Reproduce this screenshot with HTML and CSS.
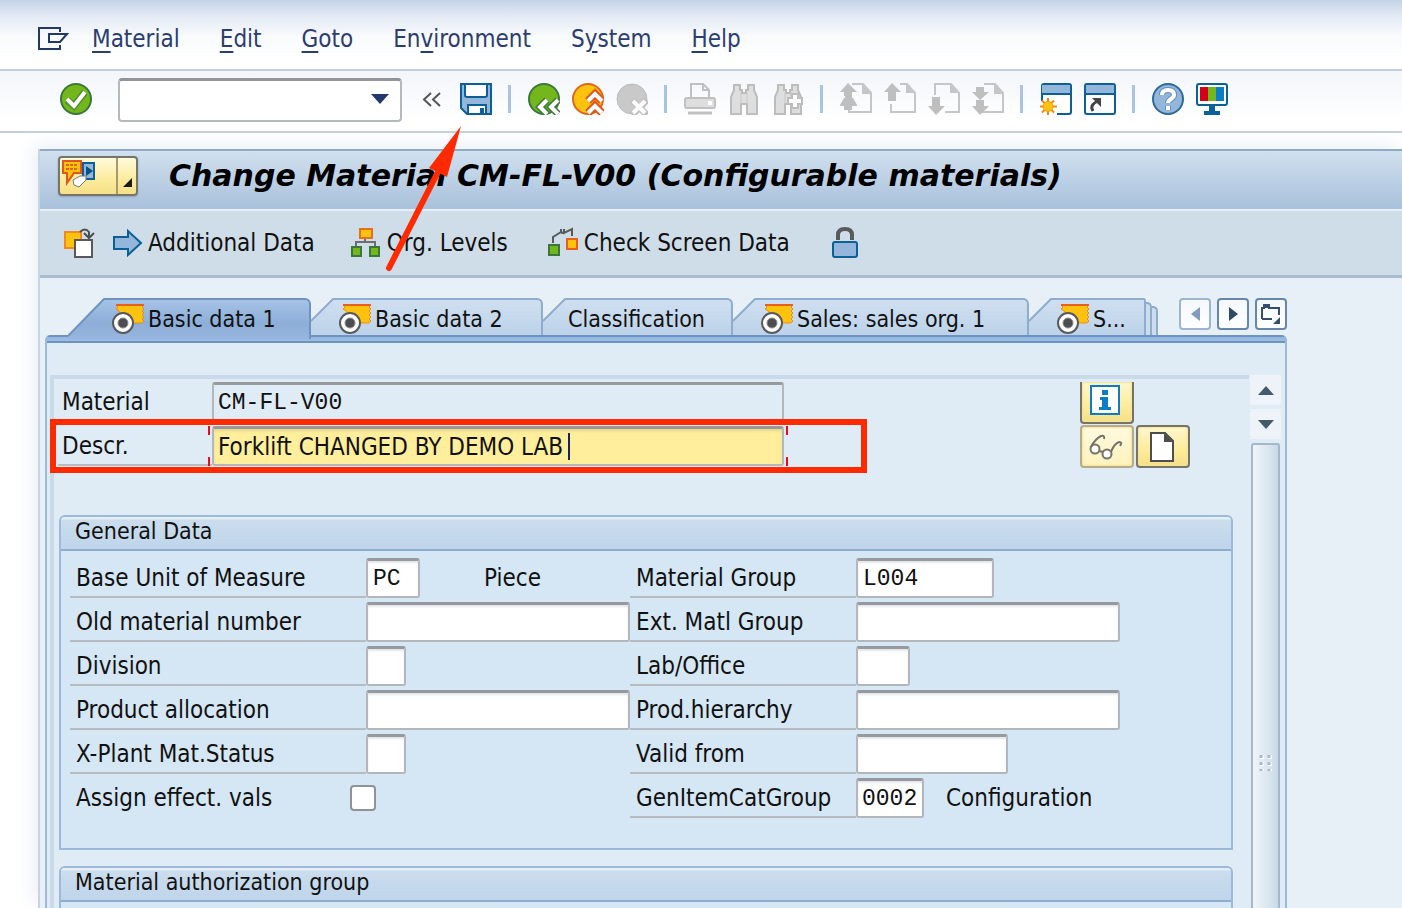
FILE: index.html
```html
<!DOCTYPE html>
<html lang="en">
<head>
<meta charset="utf-8">
<title>Change Material CM-FL-V00</title>
<link rel="stylesheet" href="styles.css">
</head>
<body>
<svg class="defs" aria-hidden="true">
  <linearGradient id="tab-on" x1="0" y1="0" x2="0" y2="1"><stop offset="0" stop-color="#a6c3e6"/><stop offset="0.6" stop-color="#8daed8"/><stop offset="1" stop-color="#96b6de"/></linearGradient>
  <linearGradient id="tab-off" x1="0" y1="0" x2="0" y2="1"><stop offset="0" stop-color="#cfdff0"/><stop offset="1" stop-color="#bcd2e9"/></linearGradient>
  <symbol id="slope" viewBox="0 0 23 38">
    <path d="M0 23L22 1H23V38H0z" fill="url(#tab-off)"/>
    <path d="M0 23L22 1H23" fill="none" stroke="#8eaccd" stroke-width="2"/>
  </symbol>
  <symbol id="view-mark" viewBox="0 0 33 30">
    <path d="M4 1H32l-2 2 2 2-2 2 2 2-2 2 2 2-2 2 2 2-2 2H18L6 6l-2-1 2-2z" fill="#ffc20e" stroke="#ee8a1c" stroke-width="1"/>
    <path d="M4 1H32" stroke="#e8601c" stroke-width="2"/>
    <circle cx="11" cy="19" r="10" fill="#fff" stroke="#58595b" stroke-width="2"/>
    <circle cx="11" cy="19" r="5" fill="#4d4d4f" stroke="#8a8b8e" stroke-width="1"/>
  </symbol>
  <symbol id="sheet" viewBox="0 0 32 32">
    <path d="M12 1H23L31 10V29H9V21M23 1V10H31" fill="none" stroke="#c6c6c6" stroke-width="2"/>
    <path d="M22 1L31 10H22z" fill="#c6c6c6"/>
  </symbol>
  <symbol id="binoculars" viewBox="0 0 32 32">
    <path d="M6 2H12V7H14V10H18V7H20V2H26V7L29 14V31H19V21H13V31H3V14L6 7z" fill="#dedede" stroke="#bcbcbc" stroke-width="2"/>
    <path d="M13 10V21M19 10V21" stroke="#c8c8c8"/>
  </symbol>
</svg>

<nav class="menubar">
  <button class="menu-icon" aria-label="Menu">
    <svg width="32" height="24" viewBox="0 0 32 24" fill="none" stroke="#22386b" stroke-width="2"><path d="M22 5V1H1V22H22V18"/><path d="M11 7H29L22 15H11z"/></svg>
  </button>
  <a href="#"><u>M</u>aterial</a>
  <a href="#"><u>E</u>dit</a>
  <a href="#"><u>G</u>oto</a>
  <a href="#">En<u>v</u>ironment</a>
  <a href="#">S<u>y</u>stem</a>
  <a href="#"><u>H</u>elp</a>
</nav>

<div class="toolbar">
  <button class="icon enter" aria-label="Enter">
    <svg viewBox="0 0 32 32"><circle cx="16" cy="16" r="15" fill="#74b71c" stroke="#39783a" stroke-width="2"/><path d="M7 17L14 23L25 9" fill="none" stroke="#4f8f2a" stroke-width="7"/><path d="M7 16L14 23L25 9" fill="none" stroke="#fff" stroke-width="4"/></svg>
  </button>
  <div class="command">
    <input type="text" aria-label="Command">
    <button aria-label="Show history"><svg width="18" height="10" viewBox="0 0 18 10"><path d="M0 0H18L9 10z" fill="#22386b"/></svg></button>
  </div>
  <button class="collapse" aria-label="Hide command field"><svg width="19" height="15" viewBox="0 0 19 15" fill="none" stroke="#555" stroke-width="2"><path d="M9 1L2 7.500L9 14M18 1L11 7.500L18 14"/></svg></button>
  <div class="icons">
    <button class="icon" aria-label="Save"><svg viewBox="0 0 32 32"><path d="M1 1H31V31H7L1 25z" fill="#93b6da" stroke="#0b6095" stroke-width="2"/><path d="M5 1V12Q5 14 7 14H25Q27 14 27 12V1z" fill="#fff" stroke="#0b6095" stroke-width="2"/><path d="M8 31V22H26V31z" fill="#fff" stroke="#0b6095" stroke-width="2"/><path d="M20 25H24V31H20z" fill="#0b6095"/></svg></button>
    <span class="sep"></span>
    <button class="icon" aria-label="Back"><svg viewBox="0 0 32 32"><circle cx="16" cy="16" r="15" fill="#74b71c" stroke="#39783a" stroke-width="2"/><path d="M19 17L12 24L19 31M30 17L23 24L30 31" fill="none" stroke="#39783a" stroke-width="7"/><path d="M19 17L12 24L19 31M30 17L23 24L30 31" fill="none" stroke="#fff" stroke-width="4"/></svg></button>
    <button class="icon" aria-label="Exit"><svg viewBox="0 0 32 32"><circle cx="16" cy="16" r="15" fill="#ffc20e" stroke="#e2651c" stroke-width="2"/><path d="M16 18L23 11L30 18M16 30L23 23L30 30" fill="none" stroke="#e2551c" stroke-width="8"/><path d="M16 18L23 11L30 18M16 30L23 23L30 30" fill="none" stroke="#fff" stroke-width="4"/></svg></button>
    <button class="icon" aria-label="Cancel" disabled><svg viewBox="0 0 32 32"><circle cx="16" cy="16" r="15" fill="#c9c9c9" stroke="#bdbdbd"/><path d="M16 17L31 32M31 17L16 32" stroke="#c2c2c2" stroke-width="7"/><path d="M17 18L29 30M29 18L17 30" stroke="#fff" stroke-width="4"/></svg></button>
    <span class="sep"></span>
    <button class="icon" aria-label="Print" disabled><svg viewBox="0 0 32 32" fill="none" stroke="#c0c0c0" stroke-width="2"><path d="M7 14V1H19L25 7V14M19 1V7H25"/><rect x="1" y="15" width="30" height="10" rx="2" fill="#dedede"/><path d="M24 20H28" stroke="#fff" stroke-width="4"/><path d="M4 30H28" stroke-width="3"/></svg></button>
    <button class="icon" aria-label="Find" disabled><svg viewBox="0 0 32 32"><use href="#binoculars"/></svg></button>
    <button class="icon" aria-label="Find next" disabled><svg viewBox="0 0 32 32"><use href="#binoculars"/><path d="M23 10V26M15 18H31" stroke="#bdbdbd" stroke-width="8"/><path d="M23 12V24M17 18H29" stroke="#fff" stroke-width="4"/></svg></button>
    <span class="sep"></span>
    <button class="icon" aria-label="First page" disabled><svg viewBox="0 0 32 32"><use href="#sheet"/><path d="M8 0L17 9H12V13L17 22V23H12V27H4V23H0V22L4 15V9H0z" fill="#bfbfbf"/><path d="M0 14H5M12 14H16" stroke="#f7f9fc" stroke-width="2"/></svg></button>
    <button class="icon" aria-label="Previous page" disabled><svg viewBox="0 0 32 32"><path d="M16 1H23L31 10V29H7V21" fill="none" stroke="#c6c6c6" stroke-width="2"/><path d="M22 1L31 10H22z" fill="#c6c6c6"/><path d="M8 0L17 9H12V18H4V9H0z" fill="#bfbfbf"/></svg></button>
    <button class="icon" aria-label="Next page" disabled><svg viewBox="0 0 32 32"><path d="M7 12V1H23L31 10V29H17" fill="none" stroke="#c6c6c6" stroke-width="2"/><path d="M22 1L31 10H22z" fill="#c6c6c6"/><path d="M4 14H12V23H17L8 32L0 23H4z" fill="#bfbfbf"/></svg></button>
    <button class="icon" aria-label="Last page" disabled><svg viewBox="0 0 32 32"><use href="#sheet"/><path d="M4 4H12V9H17L8 17L0 9H4zM4 17H12V23H17L8 32L0 23H4z" fill="#bfbfbf"/></svg></button>
    <span class="sep"></span>
    <button class="icon" aria-label="New session"><svg viewBox="0 0 32 32"><path d="M2 18V3Q2 1 4 1H29Q31 1 31 3V29Q31 31 29 31H17" fill="#fff" stroke="#0b6095" stroke-width="2"/><path d="M2 2H30V11H2z" fill="#93b6da"/><path d="M1 11H31" stroke="#0b6095" stroke-width="2"/><path d="M8 15V32M0 23.500H17M2 17.500L14 29.500M14 17.500L2 29.500" stroke="#f08a10" stroke-width="2"/><circle cx="8" cy="23.500" r="5" fill="#ffc20e" stroke="#f5a010" stroke-width="1"/></svg></button>
    <button class="icon" aria-label="Create shortcut"><svg viewBox="0 0 32 32"><rect x="1" y="1" width="30" height="30" rx="2" fill="#fff" stroke="#0b6095" stroke-width="2"/><path d="M2 2H30V10H2z" fill="#93b6da"/><path d="M1 11H31" stroke="#0b6095" stroke-width="2"/><path d="M9 28Q5 22 14 18" fill="none" stroke="#444" stroke-width="3"/><path d="M8 15H17V24z" fill="#444"/></svg></button>
    <span class="sep"></span>
    <button class="icon" aria-label="Help"><svg viewBox="0 0 32 32" fill="none"><circle cx="16" cy="16" r="15" fill="#93b6da" stroke="#2f6a9c" stroke-width="2"/><path d="M10 12Q10 7 16 7T22 12Q22 14 19 16Q16 18 16 20M16 23V27" stroke="#5f8fbd" stroke-width="6"/><path d="M10 12Q10 7 16 7T22 12Q22 14 19 16Q16 18 16 20M16 23V27" stroke="#fff" stroke-width="4"/></svg></button>
    <button class="icon" aria-label="Customize layout"><svg viewBox="0 0 32 32"><rect x="1" y="1" width="30" height="21" rx="2" fill="#fff" stroke="#0b6095" stroke-width="2"/><path d="M4 4H12V18H4z" fill="#d4001a"/><path d="M12 4H20V18H12z" fill="#74b71c"/><path d="M20 4H28V18H20z" fill="#0a7dc6"/><path d="M13 22H19V28H24V32H8V28H13z" fill="#0b6095"/></svg></button>
  </div>
</div>

<main class="frame">
  <header class="titlebar">
    <div class="split">
      <button aria-label="Services for object"><svg width="34" height="30" viewBox="0 0 34 30"><rect x="21" y="3" width="11" height="16" fill="#93b6da" stroke="#0b6095" stroke-width="2"/><path d="M24 6L31 11L24 16z" fill="#0b5080"/><path d="M11 20L18 16H24V20L17 27L12 25z" fill="#fff" stroke="#777"/><path d="M1 1H19V13H12L5 23V13H1z" fill="#ffc20e" stroke="#e2551c" stroke-width="2"/><path d="M4 5H16M4 9H16" stroke="#e2651c" stroke-width="2" stroke-dasharray="3 1"/></svg></button>
      <button aria-label="More services"><svg width="9" height="9" viewBox="0 0 9 9"><path d="M9 0V9H0z" fill="#1a1a1a"/></svg></button>
    </div>
    <h1>Change Material CM-FL-V00 (Configurable materials)</h1>
  </header>

  <div class="appbar">
    <button class="other" aria-label="Other material"><svg width="32" height="32" viewBox="0 0 32 32"><rect x="2" y="5" width="16" height="16" fill="#ffc20e" stroke="#f08a1c" stroke-width="2"/><rect x="12" y="13" width="17" height="17" fill="#fff" stroke="#58595b" stroke-width="2"/><path d="M17 5Q22 0 26 5V10M21 6L26 11L31 6" fill="none" stroke="#4d4d4f" stroke-width="2"/></svg></button>
    <button class="additional"><svg width="30" height="32" viewBox="0 0 30 32"><path d="M1 10H15V4L28 16L15 28V22H1z" fill="#93b6da" stroke="#0b6095" stroke-width="2"/></svg>Additional Data</button>
    <button class="levels"><svg width="32" height="32" viewBox="0 0 32 32"><path d="M15 11V15M6 19V15H25V19" fill="none" stroke="#6d6e71" stroke-width="2"/><rect x="10" y="2" width="12" height="9" fill="#ffc20e" stroke="#e8701c" stroke-width="2"/><rect x="2" y="20" width="9" height="9" fill="#74b71c" stroke="#39783a" stroke-width="2"/><rect x="20" y="20" width="9" height="9" fill="#74b71c" stroke="#39783a" stroke-width="2"/></svg>Org. Levels</button>
    <button class="check"><svg width="32" height="32" viewBox="0 0 32 32"><path d="M6 16V10L14 5V2M14 6L18 5M17 2V6L25 2V9" fill="none" stroke="#58595b" stroke-width="2"/><rect x="2" y="18" width="10" height="10" fill="#74b71c" stroke="#39783a" stroke-width="2"/><rect x="20" y="12" width="10" height="10" fill="#ffc20e" stroke="#e8601c" stroke-width="2"/></svg>Check Screen Data</button>
    <button class="lock" aria-label="Lock"><svg width="28" height="32" viewBox="0 0 28 32"><path d="M7 13V8Q7 2 14 2T21 8V13" fill="none" stroke="#5a5a5c" stroke-width="4"/><rect x="2" y="15" width="24" height="15" rx="2" fill="#93b6da" stroke="#0b6095" stroke-width="2"/></svg></button>
  </div>

  <section class="work">
    <div class="tabs" role="tablist">
      <button class="tab active" role="tab" aria-selected="true"><svg class="slope" width="37" height="41" viewBox="0 0 37 41"><path d="M0 38L36 1H37V41H0z" fill="url(#tab-on)"/><path d="M0 38L36 1H37" fill="none" stroke="#7092bf" stroke-width="2"/></svg><span><svg width="33" height="30"><use href="#view-mark"/></svg>Basic data 1</span></button>
      <button class="tab" role="tab"><svg width="23" height="38"><use href="#slope"/></svg><span><svg width="33" height="30"><use href="#view-mark"/></svg>Basic data 2</span></button>
      <button class="tab plain" role="tab"><svg width="23" height="38"><use href="#slope"/></svg><span>Classification</span></button>
      <button class="tab wide" role="tab"><svg width="23" height="38"><use href="#slope"/></svg><span><svg width="33" height="30"><use href="#view-mark"/></svg>Sales: sales org. 1</span></button>
      <button class="tab short" role="tab"><svg width="23" height="38"><use href="#slope"/></svg><span><svg width="33" height="30"><use href="#view-mark"/></svg>S...</span></button>
      <i class="edge"></i><i class="edge low"></i>
      <div class="tabnav">
        <button aria-label="Previous tab" disabled><svg width="9" height="14" viewBox="0 0 9 14"><path d="M9 0V14L0 7z" fill="#7f9cbf"/></svg></button>
        <button aria-label="Next tab"><svg width="9" height="14" viewBox="0 0 9 14"><path d="M0 0V14L9 7z" fill="#2f4a66"/></svg></button>
        <button aria-label="Tab list"><svg width="20" height="20" viewBox="0 0 20 20"><path d="M1 15V4H3V1H8V4H18V11M1 15H11" fill="none" stroke="#34506e" stroke-width="2"/><path d="M3 1H8V4H3z" fill="#34506e"/><path d="M19 13V20H12z" fill="#34506e"/></svg></button>
      </div>
    </div>

    <div class="sheet">
      <div class="pane">
        <div class="head">
          <div class="keys">
            <div class="keyrow">
              <label for="matnr">Material</label>
              <div class="field"><input id="matnr" class="mono locked" value="CM-FL-V00" readonly></div>
            </div>
            <div class="keyrow marked">
              <label for="descr">Descr.</label>
              <div class="field current"><input id="descr" value="Forklift CHANGED BY DEMO LAB"><i class="caret"></i></div>
            </div>
          </div>
          <div class="actions">
            <button class="info" aria-label="Information"><svg width="30" height="30" viewBox="0 0 30 30"><rect x="1" y="1" width="28" height="28" fill="#fff" stroke="#0a7dc6" stroke-width="2"/><path d="M12 5H18V10H12zM10 12H18V22H21V25H9V22H12V15H10z" fill="#0a7dc6"/></svg></button>
            <button class="glasses" aria-label="Display" disabled><svg width="34" height="26" viewBox="0 0 34 26" fill="none" stroke="#77736a" stroke-width="2"><circle cx="6" cy="15" r="4.500" fill="#fff"/><circle cx="18" cy="20" r="4.500" fill="#fff"/><path d="M10 17L14 18M2 13Q6 5 12 2Q16 1 15 5M22 18Q25 10 30 8Q34 8 31 12"/></svg></button>
            <button class="create" aria-label="Create"><svg width="24" height="30" viewBox="0 0 24 30"><path d="M1 1H15L23 9V29H1z" fill="#fff" stroke="#4d4d4f" stroke-width="2"/><path d="M14 1L23 10H14z" fill="#4d4d4f"/></svg></button>
          </div>
        </div>

        <section class="group">
          <h2>General Data</h2>
          <div class="grid">
            <label for="uom">Base Unit of Measure</label><div class="cell"><input id="uom" class="mono w3" value="PC"><span class="piece">Piece</span></div>
            <label for="mgrp">Material Group</label><div class="cell"><input id="mgrp" class="mono w9" value="L004"></div>
            <label for="oldno">Old material number</label><div class="cell"><input id="oldno" class="mono w18"></div>
            <label for="egrp">Ext. Matl Group</label><div class="cell"><input id="egrp" class="mono w18"></div>
            <label for="div">Division</label><div class="cell"><input id="div" class="mono w2"></div>
            <label for="lab">Lab/Office</label><div class="cell"><input id="lab" class="mono w3"></div>
            <label for="alloc">Product allocation</label><div class="cell"><input id="alloc" class="mono w18"></div>
            <label for="hier">Prod.hierarchy</label><div class="cell"><input id="hier" class="mono w18"></div>
            <label for="status">X-Plant Mat.Status</label><div class="cell"><input id="status" class="mono w2"></div>
            <label for="valid">Valid from</label><div class="cell"><input id="valid" class="mono w10"></div>
            <div class="tick"><label for="eff">Assign effect. vals</label><input id="eff" type="checkbox"></div>
            <label for="cat">GenItemCatGroup</label><div class="cell"><input id="cat" class="mono w4" value="0002"><span class="config">Configuration</span></div>
          </div>
        </section>

        <section class="group rest">
          <h2>Material authorization group</h2>
        </section>
      </div>

      <div class="scroll">
        <button aria-label="Scroll up"><svg width="16" height="9" viewBox="0 0 16 9"><path d="M0 9L8 0L16 9z" fill="#44596b"/></svg></button>
        <button aria-label="Scroll down"><svg width="16" height="9" viewBox="0 0 16 9"><path d="M0 0H16L8 9z" fill="#44596b"/></svg></button>
        <div class="thumb"><svg width="14" height="18" viewBox="0 0 14 18"><path d="M3 1v16M11 1v16" stroke="#fff" stroke-width="4" stroke-dasharray="4 3"/><path d="M2 1v16M10 1v16" stroke="#a9b9c8" stroke-width="3" stroke-dasharray="3 4"/></svg></div>
      </div>
    </div>
  </section>
</main>

<svg class="pointer" width="80" height="150" viewBox="0 0 80 150" aria-hidden="true"><path d="M7 144L60 40" stroke="#ff2a00" stroke-width="6" stroke-linecap="round"/><path d="M79 2L47 44L65 53z" fill="#ff2a00"/></svg>
</body>
</html>
```
FILE: styles.css
```css
*, *::before, *::after { box-sizing: border-box; }
body {
  margin: 0;
  height: 100vh;
  overflow: hidden;
  display: flex;
  flex-direction: column;
  position: relative;
  background: #fff;
  color: #111;
  font: 24px/28px "DejaVu Sans Condensed", "DejaVu Sans", "Noto Sans", sans-serif;
}
button, input { font: inherit; color: inherit; margin: 0; padding: 0; }
button { border: 0; background: none; display: flex; align-items: center; }
svg { display: block; flex: none; }
.defs { position: absolute; width: 0; height: 0; }

.menubar {
  display: flex;
  align-items: center;
  gap: 40px;
  height: 71px;
  padding: 8px 38px 0;
  flex: none;
  border-bottom: 2px solid #c3cedb;
  background: linear-gradient(#c4d3e7, #e6ecf5 18px, #f8fafc 36px, #fff 60px);
}
.menubar a { color: #2c3d70; text-decoration: none; }
.menubar u { text-underline-offset: 4px; text-decoration-thickness: 2px; }
.menu-icon { margin-right: -18px; }

.toolbar {
  display: flex;
  align-items: center;
  height: 62px;
  padding: 0 60px 4px;
  flex: none;
  border-bottom: 2px solid #c3cedb;
  background: linear-gradient(#f2f5fa, #fff 80%);
}
.icon, .icon svg { width: 32px; height: 32px; flex: none; }
.enter { margin-right: 26px; }
.command {
  display: flex;
  width: 284px;
  height: 44px;
  margin-top: 2px;
  border: 2px solid #b5b8bc;
  border-top: 3px solid #929599;
  border-radius: 4px;
  background: #fff;
}
.command button { width: 40px; padding-bottom: 4px; justify-content: center; }
.collapse { margin: 0 19px 0 20px; }
.icons { display: flex; align-items: center; gap: 12px; }
.sep { width: 3px; height: 28px; margin: 0 5px 0 4px; background: #a9c4e2; }

.frame {
  flex: 1;
  min-height: 0;
  display: flex;
  flex-direction: column;
  margin: 16px 0 0 38px;
  border-left: 2px solid #c8d4e2;
  background: #e8f0f7;
  box-shadow: -4px -4px 18px #e9eef6;
}
.titlebar {
  display: flex;
  align-items: center;
  gap: 31px;
  height: 62px;
  flex: none;
  padding: 0 18px 8px;
  border-top: 2px solid #92a9c4;
  border-bottom: 2px solid #e6eef6;
  background: linear-gradient(#d0e0ee, #a9c1dc);
}
.split {
  display: flex;
  width: 80px;
  height: 40px;
  border: 2px solid #77756a;
  border-radius: 4px;
  background: linear-gradient(#fffbdc, #fdeb9c 60%, #f6e088);
  box-shadow: 0 1px 2px #8fa5bd;
}
.split button:first-child { width: 56px; padding: 0 0 2px 2px; }
.split button:last-child { flex: 1; justify-content: center; border-left: 2px solid #a39a70; padding-top: 12px; }
h1 { margin: 0; font: italic bold 30px/40px "DejaVu Sans", sans-serif; color: #000; white-space: nowrap; }

.appbar {
  display: flex;
  align-items: center;
  height: 67px;
  flex: none;
  padding: 0 23px;
  border-bottom: 3px solid #aabdce;
  background: #cfdde8;
}
.appbar button { height: 40px; white-space: nowrap; }
.other { margin-right: 18px; }
.additional svg, .levels svg, .check svg { margin-right: 5px; }
.levels { margin-left: 35px; }
.check { margin-left: 39px; }
.lock { margin-left: 41px; }

.work { flex: 1; min-height: 0; display: flex; flex-direction: column; margin: 20px 115px 0 5px; }
.tabs { display: flex; height: 38px; padding-left: 23px; flex: none; font-size: 23px; }
.tab { align-items: stretch; }
.tab span {
  display: flex;
  align-items: center;
  width: 209px;
  padding: 2px 0 0 5px;
  border-top: 2px solid #8eaccd;
  border-right: 2px solid #8eaccd;
  border-radius: 0 6px 0 0;
  background: linear-gradient(#cfdff0, #bcd2e9);
  white-space: nowrap;
}
.tab span svg { margin-right: 3px; }
.tab.active { height: 41px; position: relative; }
.tab.active span { width: 206px; padding: 0 0 1px 7px; border-color: #7092bf; background: linear-gradient(#a6c3e6, #8daed8 60%, #96b6de); }
.tab.plain span { width: 167px; padding-left: 2px; }
.tab.wide span { width: 273px; }
.tab.short span { width: 94px; border-radius: 0 3px 0 0; }
.edge { width: 6px; margin-top: 4px; border: solid #8eaccd; border-width: 2px 2px 0 0; border-radius: 0 5px 0 0; background: #cbdced; }
.edge.low { margin-top: 8px; }
.tabnav { display: flex; gap: 6px; margin-left: auto; }
.tabnav button { width: 32px; height: 32px; justify-content: center; border: 2px solid #6587ad; border-radius: 4px; background: linear-gradient(#f4f8fc, #fff); }
.tabnav button:disabled { border-color: #9db5d1; }

.sheet {
  flex: 1;
  min-height: 0;
  display: flex;
  margin-top: -1px;
  padding: 32px 4px 0 3px;
  border: solid #9cb9da;
  border-width: 0 2px;
  border-radius: 5px 5px 0 0;
  background: linear-gradient(#7092bf 2px, #93b5df 2px, #9dbde4 6px, #7092bf 6px, #7092bf 8px, #dfebf5 8px);
}
.pane { flex: 1; min-width: 0; display: flex; flex-direction: column; margin-top: 8px; border: solid #cbdae9; border-width: 4px 0 0 4px; }
.head { display: flex; flex: none; justify-content: space-between; padding: 3px 59px 47px 4px; }
.keyrow { display: flex; position: relative; margin-bottom: 4px; }
.keyrow:last-child { margin-bottom: 0; }
label { display: block; line-height: 40px; height: 40px; border-bottom: 2px solid #b7bcc2; white-space: nowrap; }
.keyrow label { width: 154px; padding-left: 4px; }
.field { position: relative; width: 572px; }
input {
  height: 40px;
  border: 2px solid #b3b6ba;
  border-top: 3px solid #96999d;
  border-radius: 3px;
  background: #fff;
  padding: 0 5px;
  outline: 0;
  box-shadow: inset 0 2px 2px #e4e6ea;
}
.command input { flex: 1; min-width: 0; height: auto; border: 0; background: none; box-shadow: none; }
.mono { font-family: "Liberation Mono", "DejaVu Sans Mono", monospace; font-size: 23px; }
.field input { width: 100%; display: block; padding: 0 4px; }
.field .locked { background: #dfebf5; box-shadow: none; }
.current input { background: #ffee9b; box-shadow: inset 0 2px 3px #e6d68c; }
.current::before, .current::after {
  content: "";
  position: absolute;
  top: 0;
  bottom: 0;
  width: 2px;
  background: linear-gradient(#e01020 9px, transparent 9px calc(100% - 9px), #e01020 calc(100% - 9px));
}
.current::before { left: -4px; }
.current::after { right: -4px; }
.caret { position: absolute; left: 356px; top: 7px; width: 2px; height: 27px; background: #1c2455; }
.marked::after {
  content: "";
  position: absolute;
  left: -8px;
  top: -7px;
  width: 817px;
  height: 54px;
  border: 6px solid #ff2a00;
  pointer-events: none;
}

.actions { display: grid; grid-template-columns: 54px 54px; gap: 1px 2px; align-content: start; }
.actions button {
  height: 43px;
  justify-content: center;
  border: 2px solid #75736a;
  border-radius: 4px;
  background: linear-gradient(#fff7cf, #feec9a 60%, #f5df86);
  box-shadow: inset 0 0 2px 1px #f4e29a;
}
.actions .info { height: 42px; border-top: 0; border-radius: 0 0 4px 4px; padding: 0 4px 4px 0; }
.actions .glasses { grid-column: 1; border-color: #b4ac8a; background: linear-gradient(#fffae0, #fff2bd); }
.actions .glasses, .actions .create { padding-right: 3px; }

.group { flex: none; margin: 0 16px 16px 5px; border: 2px solid #9cb9da; border-radius: 6px 6px 0 0; background: #d5e6f4; }
.rest { flex: 1 0 auto; margin-bottom: 0; border-bottom: 0; }
h2 {
  margin: 0;
  height: 34px;
  padding-left: 14px;
  font-size: 23px;
  line-height: 29px;
  font-weight: normal;
  border-bottom: 2px solid #8fadcf;
  border-radius: 4px 4px 0 0;
  background: linear-gradient(#e3eef8 2px, #cbdded 3px, #bfd5eb);
}
.grid { display: grid; grid-template-columns: 296px 264px 226px 1fr; grid-auto-rows: 40px; row-gap: 4px; padding: 7px 0 30px 9px; }
.grid label { padding-left: 6px; }
.cell { display: flex; align-items: center; white-space: nowrap; }
.w2 { width: 40px; }
.w3 { width: 54px; }
.w4 { width: 68px; padding: 0 4px; }
.w9 { width: 138px; }
.w10 { width: 152px; }
.w18 { width: 264px; }
.piece { margin-left: 64px; }
.config { margin-left: 22px; }
.tick { grid-column: 1 / 3; display: flex; align-items: center; }
.tick label { width: 280px; border: 0; }
.tick input { appearance: none; width: 26px; height: 26px; border: 2px solid #8f9296; border-radius: 4px; box-shadow: none; }

.scroll { width: 31px; flex: none; display: flex; flex-direction: column; gap: 4px; margin: 8px 0 0 1px; }
.scroll button { height: 30px; flex: none; justify-content: center; background: #edf3f9; }
.thumb {
  flex: 1;
  display: flex;
  justify-content: center;
  align-items: center;
  margin: 0 1px;
  padding-top: 172px;
  border: 2px solid #a3b8cb;
  border-bottom: 0;
  border-radius: 3px 3px 0 0;
  background: linear-gradient(90deg, #f0f4f8, #dbe6f0 60%, #c9d9e8);
}

.pointer { position: absolute; left: 382px; top: 124px; pointer-events: none; }
```
